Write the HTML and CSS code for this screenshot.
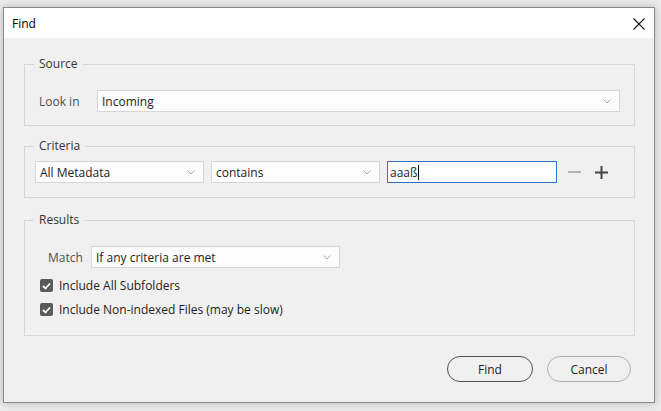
FILE: index.html
```html
<!DOCTYPE html>
<html>
<head>
<meta charset="utf-8">
<link rel="stylesheet" href="styles.css">
</head>
<body>
<div class="dialog">
  <div class="titlebar">
    <span class="title">Find</span>
    <svg class="close" width="12" height="12" viewBox="0 0 12 12"><path d="M0.5 0.5 L11.5 11.5 M11.5 0.5 L0.5 11.5" stroke="#111" stroke-width="1.1" fill="none"/></svg>
  </div>
  <div class="content">
    <fieldset class="group source">
      <legend>Source</legend>
      <div class="row">
        <span class="label look">Look in</span>
        <div class="select wide"><span>Incoming</span><svg class="chev" width="8" height="5" viewBox="0 0 8 5"><path d="M0.5 0.5 L4 4 L7.5 0.5" stroke="#a8a8a8" fill="none"/></svg></div>
      </div>
    </fieldset>
    <fieldset class="group criteria">
      <legend>Criteria</legend>
      <div class="row crit">
        <div class="select c1"><span>All Metadata</span><svg class="chev" width="8" height="5" viewBox="0 0 8 5"><path d="M0.5 0.5 L4 4 L7.5 0.5" stroke="#a8a8a8" fill="none"/></svg></div>
        <div class="select c2"><span>contains</span><svg class="chev" width="8" height="5" viewBox="0 0 8 5"><path d="M0.5 0.5 L4 4 L7.5 0.5" stroke="#a8a8a8" fill="none"/></svg></div>
        <div class="textbox"><span>aaaß</span><span class="caret"></span></div>
        <svg class="minus" width="14" height="14" viewBox="0 0 14 14"><path d="M0 7 H13" stroke="#b4b4b4" stroke-width="2"/></svg>
        <svg class="plus" width="13" height="13" viewBox="0 0 13 13"><path d="M0 6.5 H13 M6.5 0 V13" stroke="#444" stroke-width="2"/></svg>
      </div>
    </fieldset>
    <fieldset class="group results">
      <legend>Results</legend>
      <div class="row">
        <span class="label match">Match</span>
        <div class="select m"><span>If any criteria are met</span><svg class="chev" width="8" height="5" viewBox="0 0 8 5"><path d="M0.5 0.5 L4 4 L7.5 0.5" stroke="#a8a8a8" fill="none"/></svg></div>
      </div>
      <div class="check first"><span class="box"><svg width="9" height="8" viewBox="0 0 9 8"><path d="M1 4 L3.5 6.5 L8 1.5" stroke="#fff" stroke-width="1.8" fill="none"/></svg></span><span>Include All Subfolders</span></div>
      <div class="check"><span class="box"><svg width="9" height="8" viewBox="0 0 9 8"><path d="M1 4 L3.5 6.5 L8 1.5" stroke="#fff" stroke-width="1.8" fill="none"/></svg></span><span>Include Non-indexed Files (may be slow)</span></div>
    </fieldset>
    <div class="buttons">
      <div class="btn primary">Find</div>
      <div class="btn">Cancel</div>
    </div>
  </div>
</div>
</body>
</html>
```
FILE: styles.css
```css
html, body {
  margin: 0;
  padding: 0;
}
body {
  background: #ebebeb;
  font-family: "Open Sans", "Noto Sans", sans-serif;
  font-size: 12px;
  color: #1e1e1e;
  padding: 7px 0 0 3px;
  height: 411px;
  box-sizing: border-box;
}
.dialog {
  width: 650px;
  height: 394px;
  border: 1px solid #8a8a8a;
  background: #f0f0f0;
  box-shadow: 0 0 8px rgba(0,0,0,0.22);
  display: flex;
  flex-direction: column;
}
.titlebar {
  height: 30px;
  background: #fff;
  display: flex;
  align-items: center;
  justify-content: space-between;
  padding: 0 9px 0 8px;
}
.title {
  color: #000;
  font-size: 12px;
}
.close {
  margin-top: 1px;
}
.content {
  padding: 18px 19px 0 20px;
  display: flex;
  flex-direction: column;
}
.group {
  margin: 0;
  padding: 0 14px;
  border: 1px solid #d7d7d7;
  min-width: 0;
}
.group legend {
  margin-left: -5px;
  padding: 0 5px;
  line-height: 16px;
  color: #333;
}
.source {
  padding-top: 18px;
  padding-bottom: 13px;
}
.criteria {
  margin-top: 12px;
  padding: 7px 10px 14px 10px;
}
.criteria legend {
  margin-left: -1px;
}
.results {
  margin-top: 14px;
  padding: 18px 14px 17px 14px;
}
.row {
  display: flex;
  align-items: center;
}
.label {
  color: #505050;
}
.look {
  width: 58px;
}
.match {
  width: 43px;
  padding-left: 9px;
}
.select {
  height: 22px;
  box-sizing: border-box;
  border: 1px solid #d6d6d6;
  background: #fcfcfc;
  display: flex;
  align-items: center;
  justify-content: space-between;
  padding: 0 8px 0 4px;
}
.wide {
  flex: 1;
}
.c1 {
  width: 169px;
}
.c2 {
  width: 169px;
  margin-left: 7px;
}
.m {
  width: 249px;
}
.textbox {
  width: 170px;
  height: 22px;
  box-sizing: border-box;
  margin-left: 7px;
  border: 1px solid #2f72c2;
  background: #fff;
  display: flex;
  align-items: center;
  padding-left: 2px;
}
.caret {
  width: 1px;
  height: 15px;
  background: #000;
  margin-left: 1px;
}
.minus {
  margin-left: 11px;
}
.plus {
  margin-left: 13px;
}
.check {
  display: flex;
  align-items: center;
  margin-top: 7px;
  padding-left: 1px;
  height: 17px;
}
.check.first {
  margin-top: 9px;
}
.box {
  width: 13px;
  height: 13px;
  border-radius: 2px;
  background: #5a5a5a;
  display: flex;
  align-items: center;
  justify-content: center;
  margin-right: 6px;
}
.buttons {
  display: flex;
  justify-content: flex-end;
  gap: 14px;
  margin-top: 20px;
  padding-right: 4px;
}
.btn {
  width: 84px;
  height: 26px;
  box-sizing: border-box;
  border: 1px solid #b0b0b0;
  border-radius: 13px;
  display: flex;
  align-items: center;
  justify-content: center;
  color: #222;
}
.btn.primary {
  width: 86px;
  border-color: #505050;
}
```
